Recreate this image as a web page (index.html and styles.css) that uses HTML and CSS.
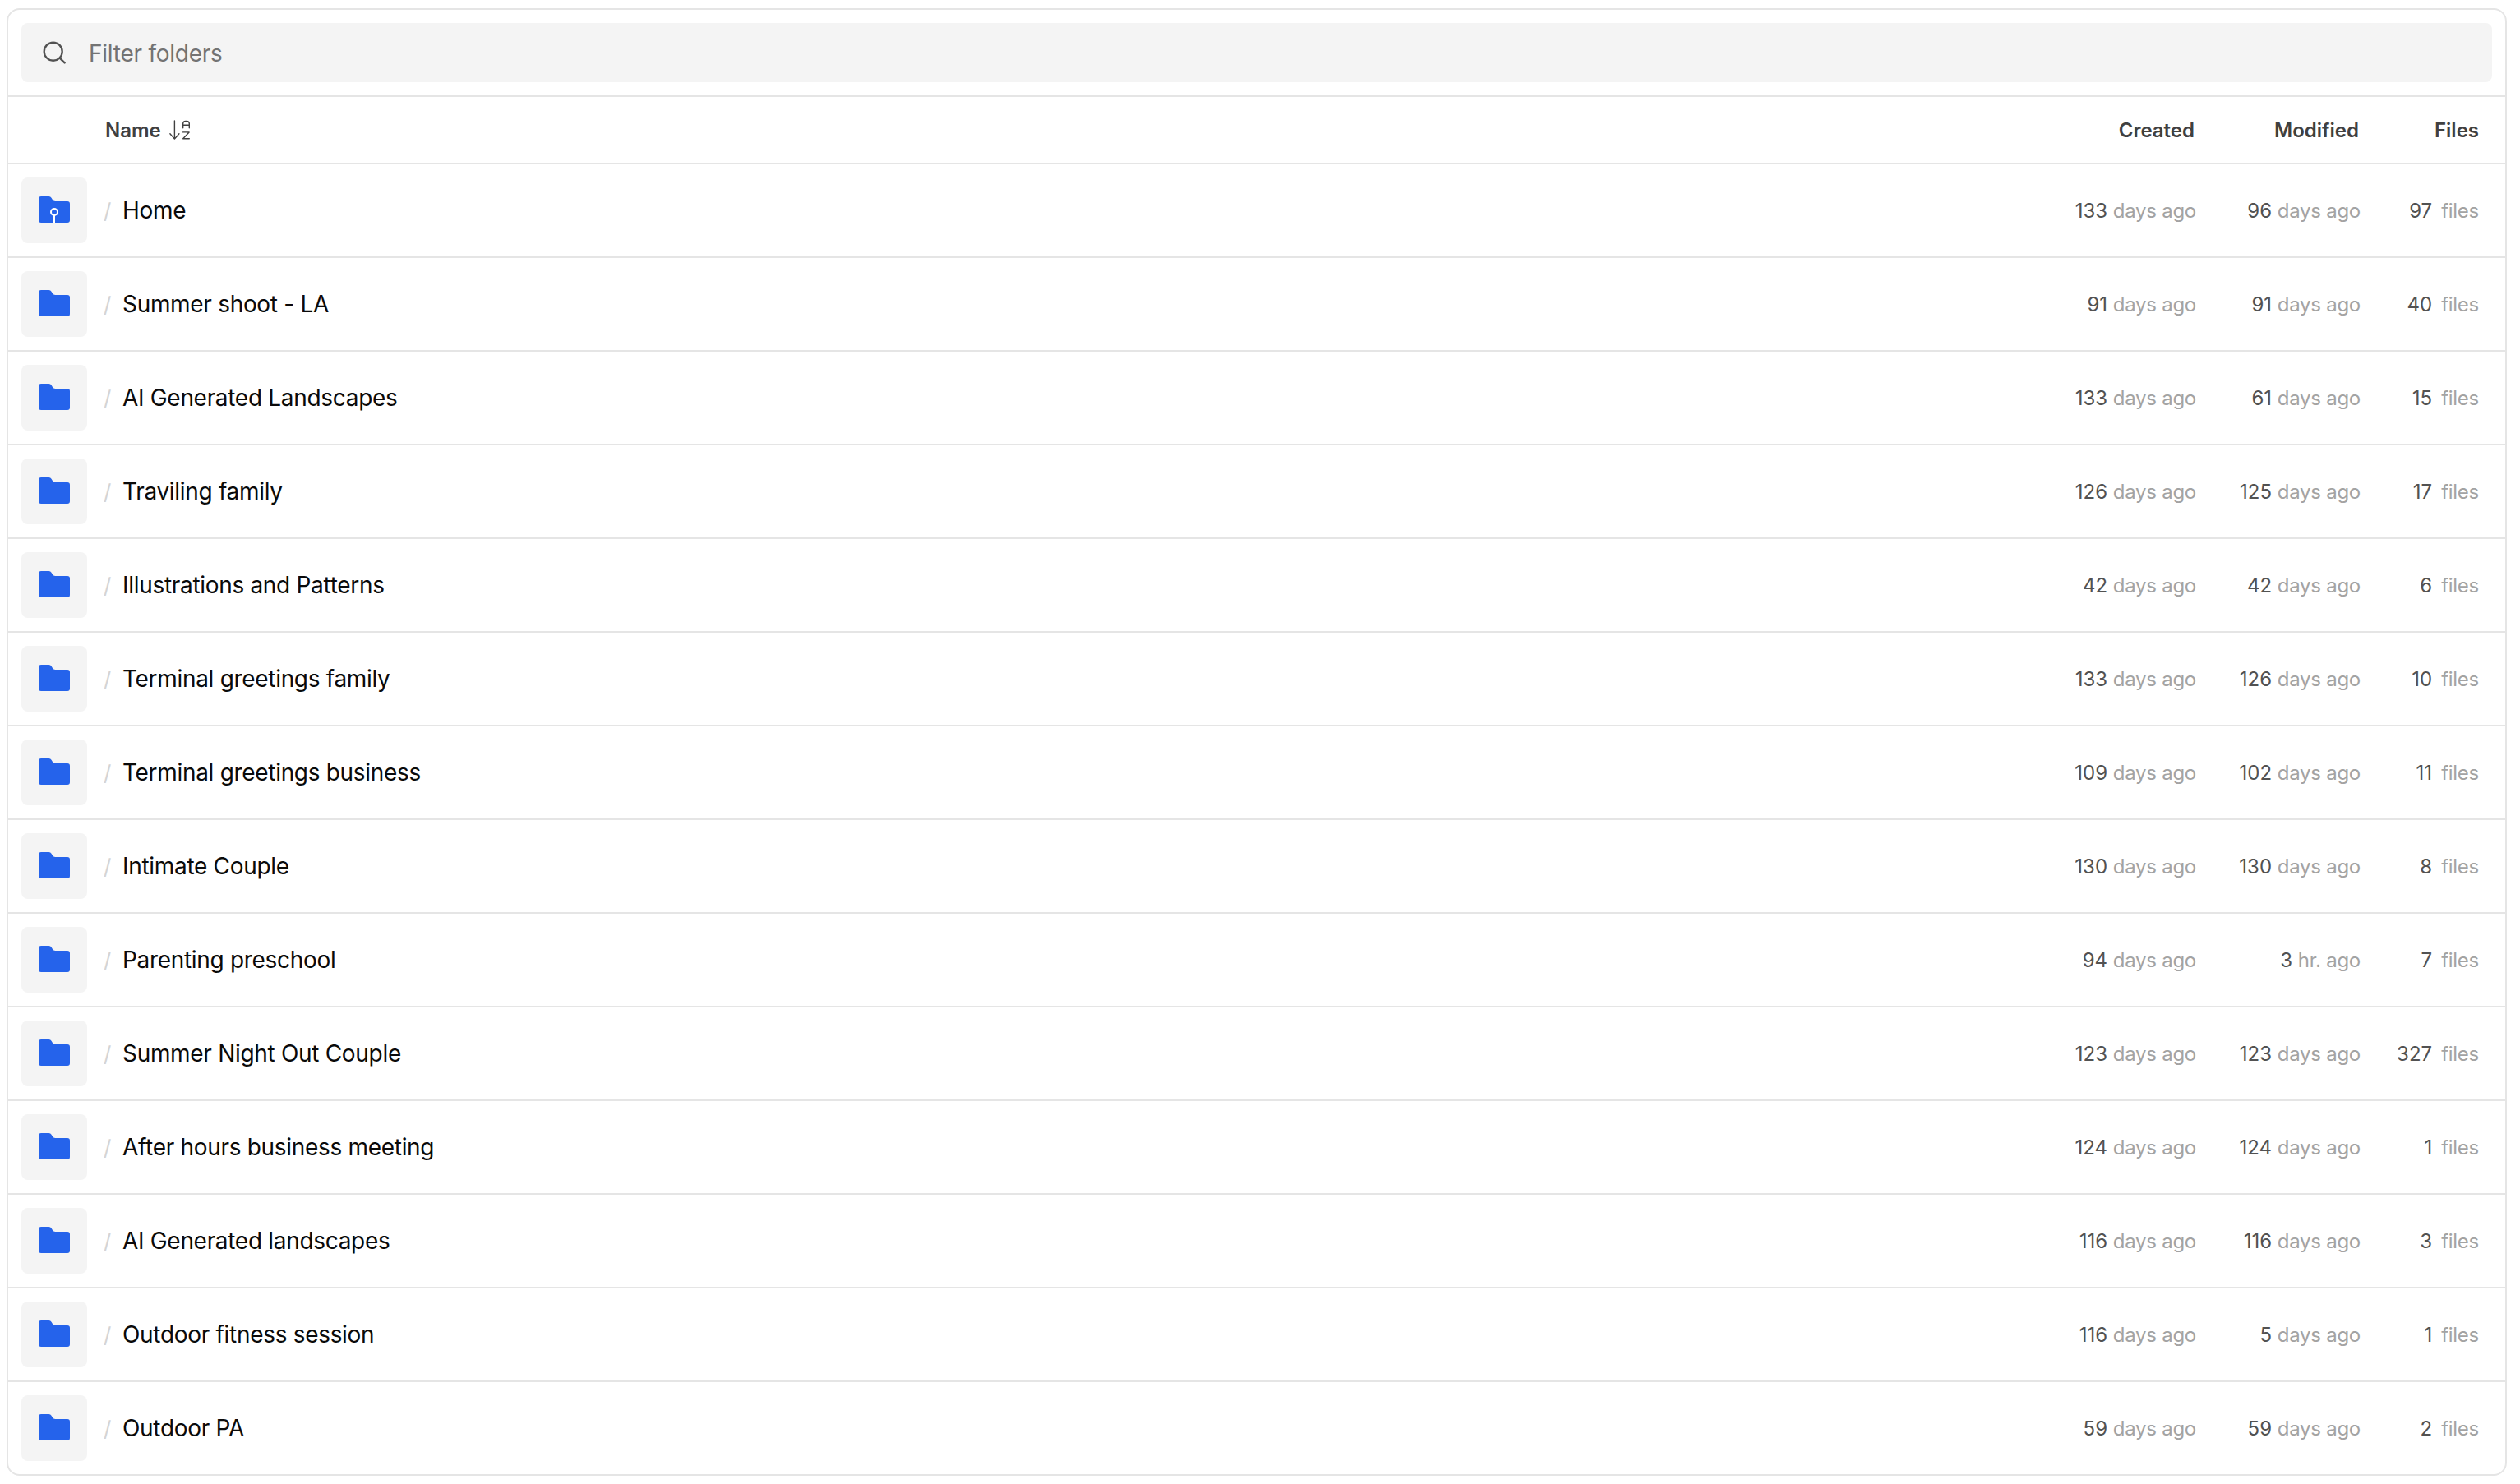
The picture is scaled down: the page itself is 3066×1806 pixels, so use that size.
FILE: index.html
```html
<!DOCTYPE html>
<html lang="en">
<head>
    <meta charset="UTF-8">
    <meta name="viewport" content="width=device-width, initial-scale=1.0">
    <title>Folders</title>
    <link rel="stylesheet" href="styles.css">
</head>
<body>
    <div class="folder-list">
        <div class="search">
            <label class="search-box">
                <svg class="search-icon" viewBox="0 0 28 28">
                    <circle cx="12.7" cy="12.7" r="11"/>
                    <path d="M20.7 20.7l5.9 5.7"/>
                </svg>
                <input type="text" class="search-input" placeholder="Filter folders">
            </label>
        </div>
        <div class="header">
            <div class="header-name">
                Name
                <svg class="sort-icon" viewBox="0 0 26 24">
                    <path d="M6.4 .9v22.2M.9 16.8l5.5 6.3 5.5-6.3"/>
                    <path d="M16.7 9.8V4.5q0-3.1 3.1-3.1h1.4q3.1 0 3.1 3.1v5.3M16.7 6.3h7.6"/>
                    <path d="M16.5 14.9h7.6l-7.4 7.8h7.6"/>
                </svg>
            </div>
            <div class="header-created">Created</div>
            <div class="header-modified">Modified</div>
            <div class="header-files">Files</div>
        </div>
        <div id="rows"></div>
    </div>

    <script>
        const folders = [
            ['Home', '133 days ago', '96 days ago', 97],
            ['Summer shoot - LA', '91 days ago', '91 days ago', 40],
            ['AI Generated Landscapes', '133 days ago', '61 days ago', 15],
            ['Traviling family', '126 days ago', '125 days ago', 17],
            ['Illustrations and Patterns', '42 days ago', '42 days ago', 6],
            ['Terminal greetings family', '133 days ago', '126 days ago', 10],
            ['Terminal greetings business', '109 days ago', '102 days ago', 11],
            ['Intimate Couple', '130 days ago', '130 days ago', 8],
            ['Parenting preschool', '94 days ago', '3 hr. ago', 7],
            ['Summer Night Out Couple', '123 days ago', '123 days ago', 327],
            ['After hours business meeting', '124 days ago', '124 days ago', 1],
            ['AI Generated landscapes', '116 days ago', '116 days ago', 3],
            ['Outdoor fitness session', '116 days ago', '5 days ago', 1],
            ['Outdoor PA', '59 days ago', '59 days ago', 2]
        ];

        // "133 days ago" -> dark number, light unit
        function age(text) {
            const i = text.indexOf(' ');
            return `${text.slice(0, i)} <span class="unit">${text.slice(i + 1)}</span>`;
        }

        document.getElementById('rows').innerHTML = folders.map(([name, created, modified, files], i) => `
            <div class="row">
                <div class="tile">
                    <svg class="folder-icon" viewBox="0 0 38 32">
                        <path d="M3 0h9.5q2 0 3 1.7l1.4 2.3q1.2 2 3.3 2H35q3 0 3 3v20q0 3-3 3H3q-3 0-3-3V3q0-3 3-3z"/>
                        ${i === 0 ? '<g class="pin"><circle cx="19" cy="19" r="4"/><path d="M19 23v9"/></g>' : ''}
                    </svg>
                </div>
                <span class="slash">/</span>
                <div class="name">${name}</div>
                <div class="created">${age(created)}</div>
                <div class="modified">${age(modified)}</div>
                <div class="files">${files}<span class="unit">files</span></div>
            </div>`).join('');
    </script>
</body>
</html>
```
FILE: styles.css
```css
* {
    box-sizing: border-box;
}
body {
    margin: 0;
    padding: 10px 16px 10px 8px;
    background: #fff;
    font-family: Inter, sans-serif;
    font-size: 24px;
}
.folder-list {
    border: 2px solid #e5e5e5;
    border-radius: 16px;
}
.search {
    padding: 16px;
}
.search-box {
    display: flex;
    align-items: center;
    height: 72px;
    padding-left: 26px;
    background: #f4f4f4;
    border-radius: 8px;
}
.search-icon {
    width: 28px;
    height: 28px;
    fill: none;
    stroke: #525252;
    stroke-width: 2.4;
    stroke-linecap: round;
}
.search-input {
    flex: 1;
    margin-left: 28px;
    padding: 2px 0 0;
    border: none;
    outline: none;
    background: none;
    font-family: inherit;
    font-size: 28px;
    letter-spacing: -0.25px;
}
.search-input::placeholder {
    color: #737373;
}
.header {
    display: flex;
    align-items: center;
    height: 82px;
    padding: 0 32px 0 118px;
    border-top: 2px solid #e5e5e5;
    color: #404040;
    font-weight: 600;
}
.header-name {
    display: flex;
    flex: 1;
    align-items: center;
}
.sort-icon {
    width: 26px;
    height: 24px;
    margin-left: 10px;
    fill: none;
    stroke: #404040;
    stroke-width: 1.4;
    stroke-linecap: round;
    stroke-linejoin: round;
}
.header-created,
.header-modified {
    width: 200px;
    padding-right: 2px;
    text-align: right;
}
.header-files,
.files {
    width: 144px;
    text-align: right;
}
.row {
    display: flex;
    align-items: center;
    height: 114px;
    padding: 0 32px 0 16px;
    border-top: 2px solid #e5e5e5;
    color: #525252;
}
.tile {
    display: flex;
    align-items: center;
    justify-content: center;
    width: 80px;
    height: 80px;
    background: #f4f4f4;
    border-radius: 8px;
}
.folder-icon {
    width: 38px;
    height: 32px;
    margin-bottom: 2px;
    fill: #2563eb;
}
.pin {
    fill: none;
    stroke: #fff;
    stroke-width: 2;
}
.slash {
    width: 23px;
    margin-left: 20px;
    color: #d4d4d4;
    font-size: 26px;
}
.name {
    flex: 1;
    color: #0a0a0a;
    font-size: 28px;
    letter-spacing: -0.011em;
}
.created,
.modified {
    width: 200px;
    text-align: right;
}
.unit {
    color: #a3a3a3;
    letter-spacing: -0.011em;
}
.files .unit {
    margin-left: 11px;
}
```
